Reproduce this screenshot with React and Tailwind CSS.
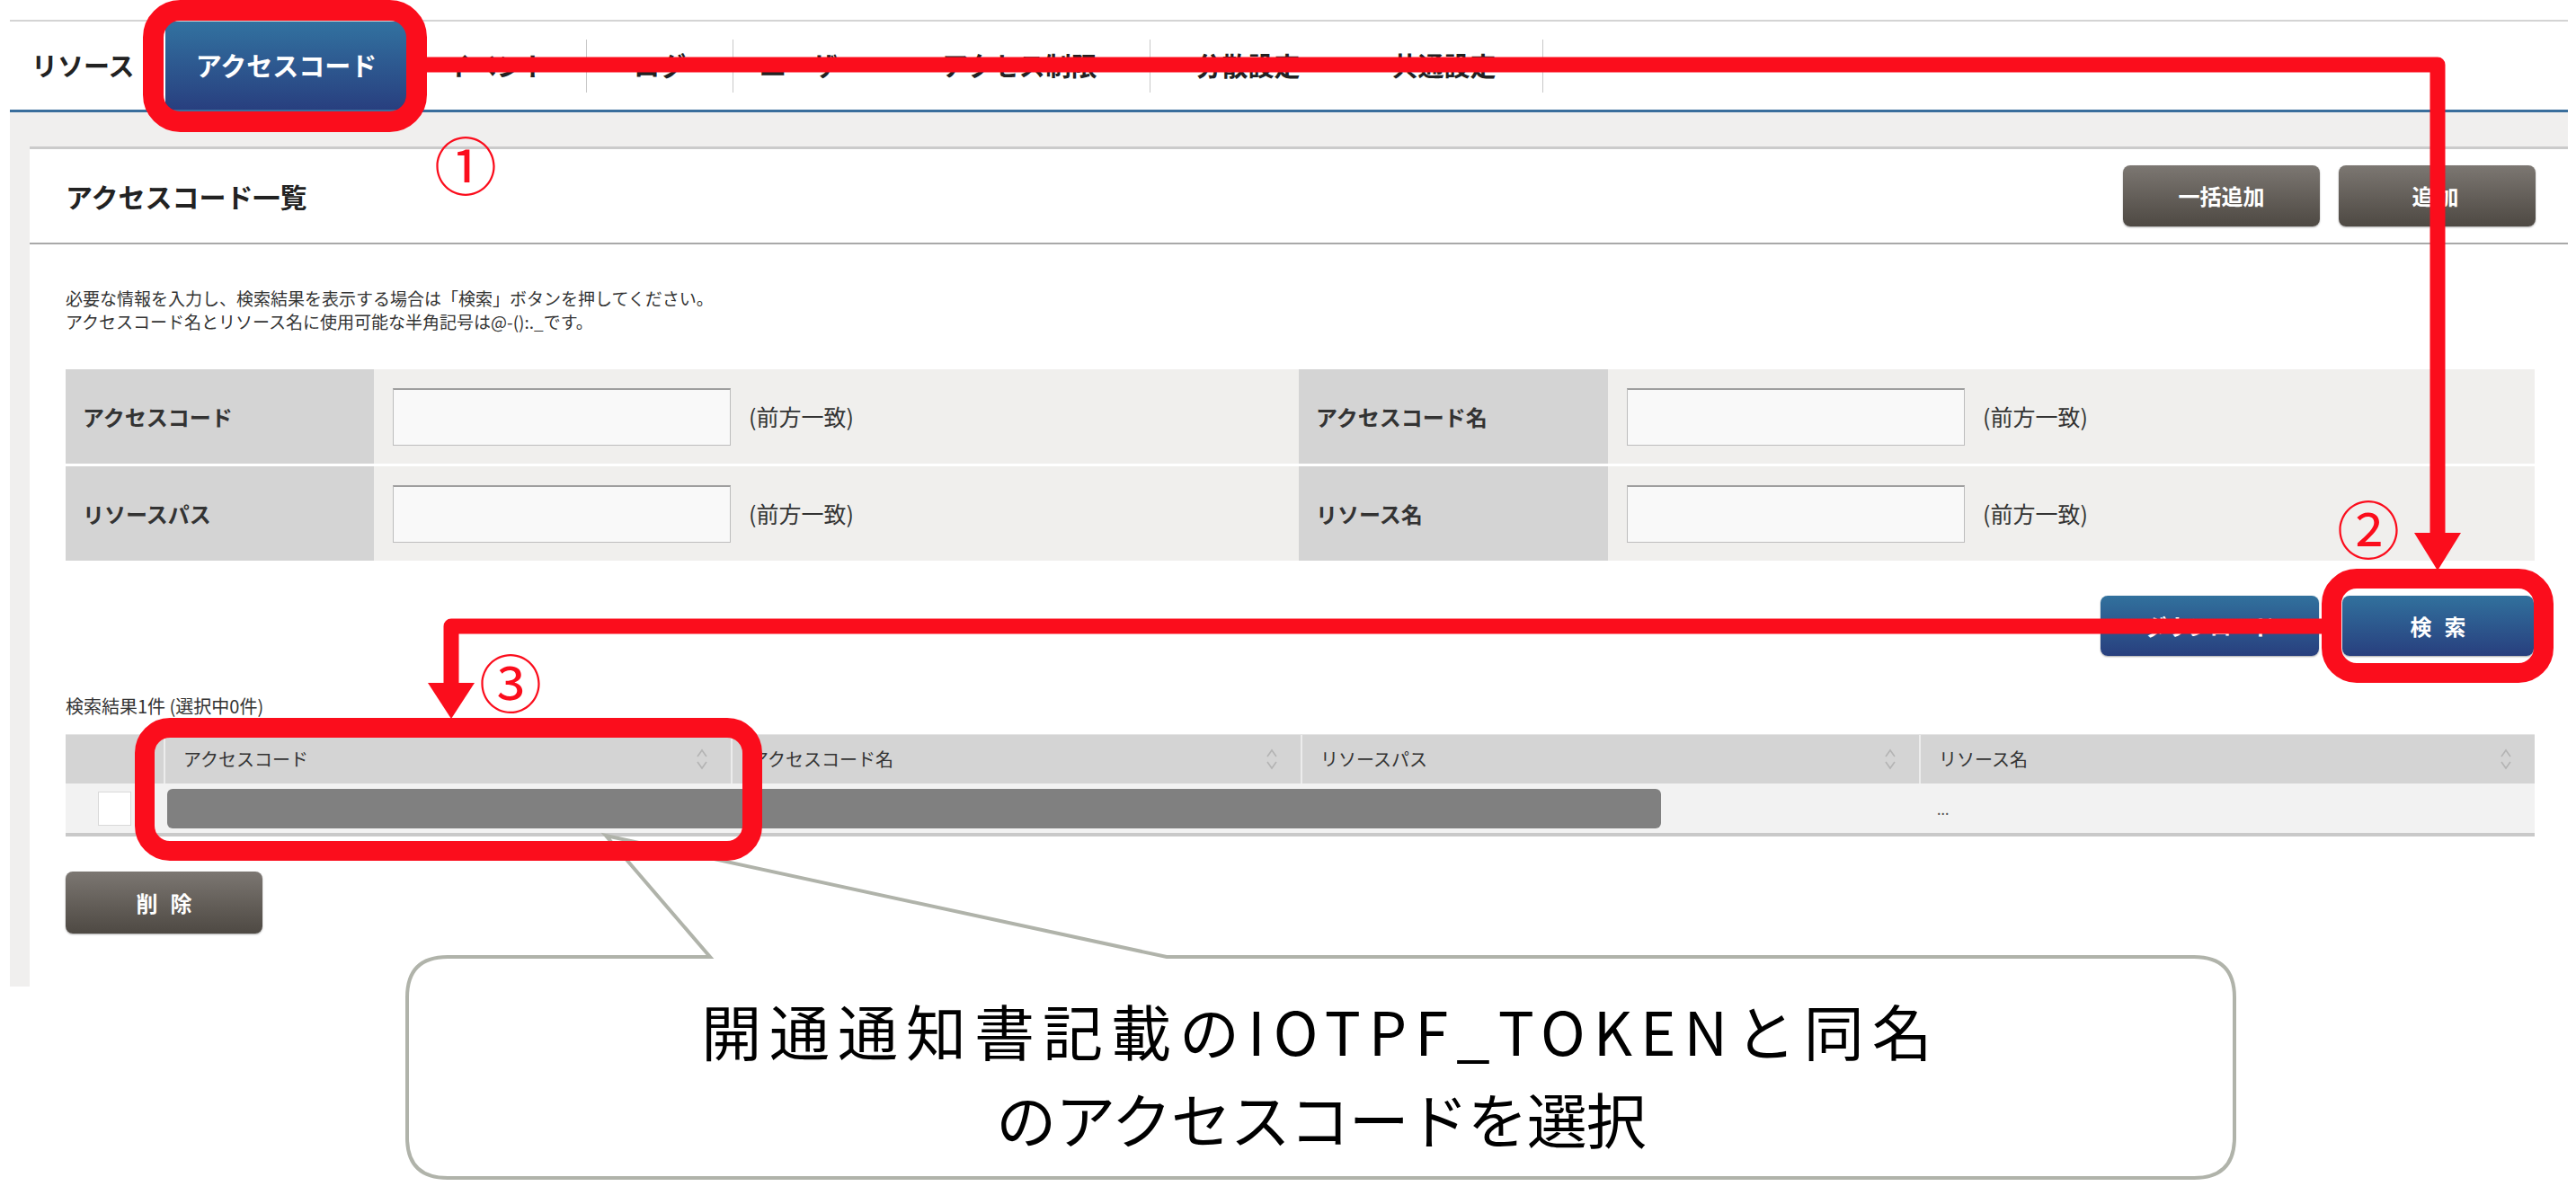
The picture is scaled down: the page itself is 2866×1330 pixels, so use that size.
import React from "react";

const tabs = [
  { label: "リソース", w: "w-[173px] justify-start pl-[24px]" },
  { label: "アクセスコード", w: "w-[269px]", active: true },
  { label: "イベント", w: "w-[199px]", sep: true },
  { label: "ログ", w: "w-[162px]", sep: true },
  { label: "ユーザー", w: "w-[174px]" },
  { label: "アクセス制限", w: "w-[289px]", sep: true },
  { label: "分散設定", w: "w-[217px]" },
  { label: "共通設定", w: "w-[219px]", sep: true },
];

const SortIcon = () => (
  <svg width="16" height="28" viewBox="0 0 16 28" className="shrink-0">
    <path d="M3 11 L8 4 L13 11" fill="none" stroke="#b4b4b4" strokeWidth="1.6" />
    <path d="M3 17 L8 24 L13 17" fill="none" stroke="#b4b4b4" strokeWidth="1.6" />
  </svg>
);

const DarkButton = ({ children, className }) => (
  <div className={`h-[68px] rounded-[8px] bg-linear-to-b from-[#7c7772] to-[#4e4943] shadow-[0_1px_2px_rgba(0,0,0,0.35)] flex items-center justify-center text-white text-[24px] font-bold ${className}`}>
    {children}
  </div>
);

const BlueButton = ({ children, className }) => (
  <div className={`h-[67px] rounded-[8px] bg-linear-to-b from-[#31719d] to-[#283f7e] shadow-[0_1px_2px_rgba(0,0,0,0.35)] flex items-center justify-center text-white text-[24px] font-bold ${className}`}>
    {children}
  </div>
);

const FormRow = ({ left, right }) => (
  <div className="grid grid-cols-[343px_1029px_344px_1fr] h-[105px]">
    <div className="bg-[#d4d4d4] flex items-center pl-[19px] text-[24px] font-bold text-[#333]">{left}</div>
    <div className="bg-[#f0efed] flex items-center pl-[21px]">
      <div className="w-[376px] h-[64px] bg-[#f9f9f9] border border-[#bdbdbd] border-t-2 border-t-[#9e9e9e]"></div>
      <span className="ml-[20px] text-[25px] text-[#333]">(前方一致)</span>
    </div>
    <div className="bg-[#d4d4d4] flex items-center pl-[19px] text-[24px] font-bold text-[#333]">{right}</div>
    <div className="bg-[#f0efed] flex items-center pl-[21px]">
      <div className="w-[376px] h-[64px] bg-[#f9f9f9] border border-[#bdbdbd] border-t-2 border-t-[#9e9e9e]"></div>
      <span className="ml-[20px] text-[25px] text-[#333]">(前方一致)</span>
    </div>
  </div>
);

const headers = ["アクセスコード", "アクセスコード名", "リソースパス", "リソース名"];

const App = () => {
  return (
    <div className="relative w-[2866px] h-[1330px] bg-white overflow-hidden font-['Noto_Sans_CJK_JP','Noto_Sans',sans-serif]">
      {/* screenshot of the admin page */}
      <div className="w-[2857px] pl-[11px] pt-[22px]">
        <div className="flex h-[100px] border-t-2 border-[#d4d4d4]">
          {tabs.map((t) => (
            <React.Fragment key={t.label}>
              <div
                className={`${t.w} flex items-center ${t.w.includes("justify-start") ? "" : "justify-center"} text-[29px] font-bold ${
                  t.active ? "bg-linear-to-b from-[#3272a0] to-[#283f7f] text-white" : "text-[#222]"
                }`}
              >
                {t.label}
              </div>
              {t.sep && <div className="w-px h-[59px] self-center bg-[#c8c8c8]"></div>}
            </React.Fragment>
          ))}
        </div>
        <div className="h-[3px] bg-[#3a6e9c]"></div>
        <div className="h-[973px] bg-[#f0efee] pl-[22px] pt-[38px]">
          <div className="h-full bg-white border-t-[3px] border-[#cbcbcb]">
            <div className="h-[106px] flex items-center justify-between pl-[40px] pr-[36px] border-b-2 border-[#a9a9a9]">
              <h1 className="text-[30px] font-bold text-[#222]">アクセスコード一覧</h1>
              <div className="flex gap-[21px]">
                <DarkButton className="w-[219px]">一括追加</DarkButton>
                <DarkButton className="w-[219px] tracking-[4px]">追加</DarkButton>
              </div>
            </div>
            <div className="pl-[40px] pr-[37px] pt-[47px]">
              <div className="text-[19px] leading-[26px] text-[#333]">
                <p>必要な情報を入力し、検索結果を表示する場合は「検索」ボタンを押してください。</p>
                <p>アクセスコード名とリソース名に使用可能な半角記号は@-():._です。</p>
              </div>
              <div className="mt-[40px] flex flex-col gap-[3px]">
                <FormRow left="アクセスコード" right="アクセスコード名" />
                <FormRow left="リソースパス" right="リソース名" />
              </div>
              <div className="mt-[39px] flex justify-end gap-[26px] pr-[1px]">
                <BlueButton className="w-[243px]">ダウンロード</BlueButton>
                <BlueButton className="w-[213px] tracking-[14px] pl-[14px]">検索</BlueButton>
              </div>
              <p className="mt-[44px] text-[20px] leading-[24px] text-[#333]">検索結果1件 (選択中0件)</p>
              <div className="mt-[19px]">
                <div className="grid grid-cols-[109px_631px_634px_688px_1fr] h-[55px] bg-[#d4d4d4] border-t border-[#e4e4e4]">
                  <div></div>
                  {headers.map((h) => (
                    <div key={h} className="flex items-center justify-between pl-[20px] pr-[24px] border-l-2 border-[#ececec] text-[20px] text-[#333]">
                      <span>{h}</span>
                      <SortIcon />
                    </div>
                  ))}
                </div>
                <div className="grid grid-cols-[109px_1953px_1fr] h-[59px] bg-[#f2f2f2] border-b-4 border-[#c9c9c9]">
                  <div className="flex items-center justify-center">
                    <div className="w-[37px] h-[38px] bg-white border border-[#d9d9d9]"></div>
                  </div>
                  <div className="flex items-center">
                    <div className="ml-[4px] w-[1662px] h-[44px] rounded-[6px] bg-[#808080]"></div>
                  </div>
                  <div className="flex items-center pl-[20px] text-[16px] text-[#555]">...</div>
                </div>
              </div>
              <DarkButton className="mt-[39px] w-[219px] h-[69px] tracking-[14px] pl-[14px]">削除</DarkButton>
            </div>
          </div>
        </div>
      </div>

      {/* callout */}
      <svg className="absolute left-0 top-0" width="2866" height="1330" viewBox="0 0 2866 1330">
        <path
          d="M 498 1065 H 790 L 674 930 L 1298 1065 H 2441 Q 2486 1065 2486 1110 V 1266 Q 2486 1311 2441 1311 H 498 Q 453 1311 453 1266 V 1110 Q 453 1065 498 1065 Z"
          fill="#ffffff"
          stroke="#b0b3aa"
          strokeWidth="4"
          strokeLinejoin="miter"
        />
      </svg>
      <div className="absolute left-[453px] top-[1065px] w-[2033px] h-[246px] flex flex-col items-center justify-center pt-[14px] text-[67px] leading-[98px] text-black">
        <p className="tracking-[9px]">開通通知書記載のIOTPF_TOKENと同名</p>
        <p className="tracking-[-1px]">のアクセスコードを選択</p>
      </div>

      {/* red annotations */}
      <svg className="absolute left-0 top-0" width="2866" height="1330" viewBox="0 0 2866 1330">
        <g fill="none" stroke="#fb0d1c">
          <rect x="170.5" y="11.5" width="293" height="124" rx="30" strokeWidth="23" />
          <rect x="2594" y="644" width="236" height="105" rx="28" strokeWidth="22" />
          <rect x="161" y="810" width="676" height="137" rx="28" strokeWidth="22" />
          <path d="M 475 72 H 2712 V 600" strokeWidth="17" strokeLinejoin="round" />
          <path d="M 2583 697 H 502 V 765" strokeWidth="17" strokeLinejoin="round" />
        </g>
        <polygon points="2686,593 2738,593 2712,635" fill="#fb0d1c" />
        <polygon points="476,760 528,760 502,800" fill="#fb0d1c" />
      </svg>
      <span className="absolute left-[518px] top-[182px] -translate-x-1/2 -translate-y-1/2 text-[70px] leading-none text-[#fb0d1c]">①</span>
      <span className="absolute left-[2635px] top-[587px] -translate-x-1/2 -translate-y-1/2 text-[70px] leading-none text-[#fb0d1c]">②</span>
      <span className="absolute left-[568px] top-[758px] -translate-x-1/2 -translate-y-1/2 text-[70px] leading-none text-[#fb0d1c]">③</span>
    </div>
  );
};

export default App;
